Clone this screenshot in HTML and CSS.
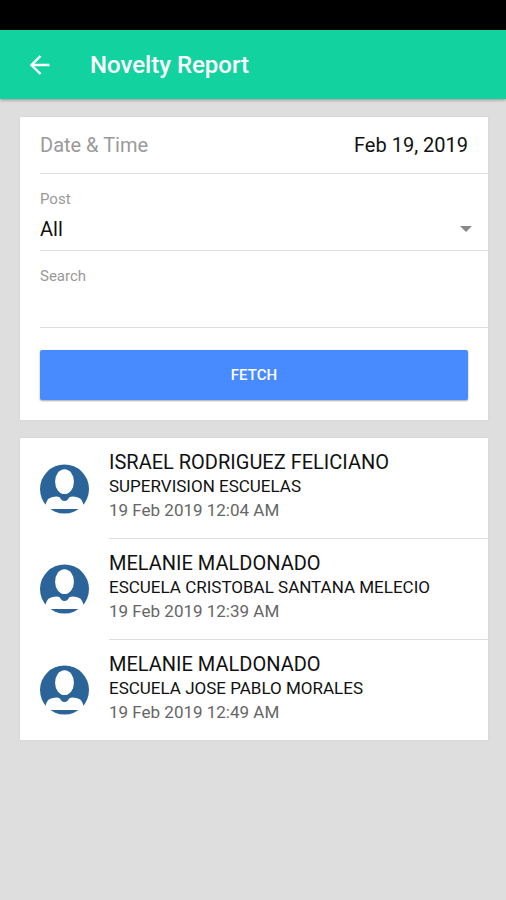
FILE: index.html
```html
<!DOCTYPE html>
<html lang="en">
<head>
  <meta charset="utf-8">
  <meta name="viewport" content="width=device-width, initial-scale=1">
  <title>Novelty Report</title>
  <link rel="stylesheet" href="styles.css">
</head>
<body>
  <div class="status-bar"></div>
  <header class="toolbar">
    <button class="back" type="button" aria-label="Back">
      <svg viewBox="0 0 20 20" width="20" height="20" aria-hidden="true"><path d="M19.500 10H2M10.500 1L1.500 10l9 9" fill="none" stroke="currentColor" stroke-width="2.4"/></svg>
    </button>
    <h1 class="title">Novelty Report</h1>
  </header>
  <main class="content">
    <form class="card filters">
      <div class="field field-inline">
        <label class="label" for="date">Date &amp; Time</label>
        <input class="control date" id="date" type="text" value="Feb 19, 2019">
      </div>
      <div class="field">
        <label class="label label-small" for="post">Post</label>
        <div class="select-wrap">
          <select class="control" id="post"><option>All</option></select>
          <svg class="caret" viewBox="0 0 12 6" width="12" height="6" aria-hidden="true"><path d="M0 0h12L6 6z" fill="currentColor"/></svg>
        </div>
      </div>
      <div class="field">
        <label class="label label-small" for="search">Search</label>
        <input class="control" id="search" type="text">
      </div>
      <button class="fetch" type="button">FETCH</button>
    </form>
    <svg class="defs" width="0" height="0" aria-hidden="true">
      <symbol id="avatar" viewBox="0 0 50 50">
        <circle cx="25" cy="25" r="25" fill="#2a6499"/>
        <ellipse cx="25" cy="17.5" rx="9.6" ry="12.7" fill="#fff"/>
        <path d="M5.500 45.500C5.500 40 6.500 34.500 12 33.300c3.500-.8 6-1 8 0 1.500 2 2.500 4 5 4s3.500-2 5-4c2-1 4.500-.8 8 0 5.500 1.200 6.500 6.700 6.500 12.200z" fill="#fff"/>
      </symbol>
    </svg>
    <ul class="card reports">
      <li class="report">
        <svg class="avatar" aria-hidden="true"><use href="#avatar"/></svg>
        <div class="details">
          <h2 class="name">ISRAEL RODRIGUEZ FELICIANO</h2>
          <p class="place">SUPERVISION ESCUELAS</p>
          <p class="time">19 Feb 2019 12:04 AM</p>
        </div>
      </li>
      <li class="report">
        <svg class="avatar" aria-hidden="true"><use href="#avatar"/></svg>
        <div class="details">
          <h2 class="name">MELANIE MALDONADO</h2>
          <p class="place">ESCUELA CRISTOBAL SANTANA MELECIO</p>
          <p class="time">19 Feb 2019 12:39 AM</p>
        </div>
      </li>
      <li class="report">
        <svg class="avatar" aria-hidden="true"><use href="#avatar"/></svg>
        <div class="details">
          <h2 class="name">MELANIE MALDONADO</h2>
          <p class="place">ESCUELA JOSE PABLO MORALES</p>
          <p class="time">19 Feb 2019 12:49 AM</p>
        </div>
      </li>
    </ul>
  </main>
</body>
</html>
```
FILE: styles.css
```css
* {
  box-sizing: border-box;
}

body {
  margin: 0;
  min-height: 100vh;
  background: #dedede;
  color: #111;
  font-family: Roboto, "Liberation Sans", sans-serif;
}

.status-bar {
  height: 30px;
  background: #000;
}

.toolbar {
  display: flex;
  align-items: center;
  gap: 30px;
  padding: 20px 30px 19px;
  background: #12d2a0;
  box-shadow: 0 1px 3px rgba(0, 0, 0, 0.35);
  color: #fff;
}

.back {
  display: flex;
  padding: 0;
  border: 0;
  background: none;
  color: inherit;
}

.title {
  margin: 0 10px;
  font-size: 24px;
  font-weight: 500;
  line-height: 30px;
}

.content {
  display: flex;
  flex-direction: column;
  gap: 18px;
  padding: 18px 18px 18px 20px;
}

.card {
  margin: 0;
  background: #fff;
  border-radius: 1px;
  box-shadow: 0 0 2px rgba(0, 0, 0, 0.08);
}

.filters {
  padding: 0 0 20px 20px;
}

.field {
  padding-top: 16px;
  border-bottom: 1px solid #dedede;
}

.field-inline {
  display: flex;
  align-items: center;
  padding: 12px 20px 12px 0;
}

.label {
  display: block;
  color: #999;
  font-size: 20px;
  line-height: 24px;
}

.label-small {
  font-size: 15px;
  line-height: 18px;
}

.control {
  display: block;
  width: 100%;
  height: 42px;
  padding: 0;
  border: 0;
  outline: 0;
  background: none;
  appearance: none;
  color: inherit;
  font: inherit;
  font-size: 20px;
}

.date {
  flex: 1;
  min-width: 0;
  height: 32px;
  text-align: right;
}

.select-wrap {
  display: flex;
  align-items: center;
  padding-right: 16px;
}

.caret {
  flex: none;
  color: #888;
}

.fetch {
  display: block;
  width: calc(100% - 20px);
  height: 50px;
  margin-top: 22px;
  border: 0;
  border-radius: 2px;
  background: #488aff;
  box-shadow: 0 1px 2px rgba(0, 0, 0, 0.35);
  color: #fff;
  font: 500 15px/20px Roboto, "Liberation Sans", sans-serif;
}

.defs {
  position: absolute;
}

.reports {
  padding: 0 0 0 20px;
  list-style: none;
}

.report {
  display: flex;
  align-items: center;
  gap: 20px;
}

.avatar {
  flex: none;
  width: 49px;
  height: 50px;
  margin-top: 1px;
}

.details {
  flex: 1;
  padding: 12px 0 16px;
}

.report + .report .details {
  border-top: 1px solid #dedede;
}

.name,
.place,
.time {
  margin: 0;
  font-weight: 400;
}

.name {
  font-size: 20px;
  line-height: 24px;
}

.place {
  font-size: 17px;
  line-height: 25px;
}

.time {
  color: #666;
  font-size: 17px;
  line-height: 23px;
}
```
